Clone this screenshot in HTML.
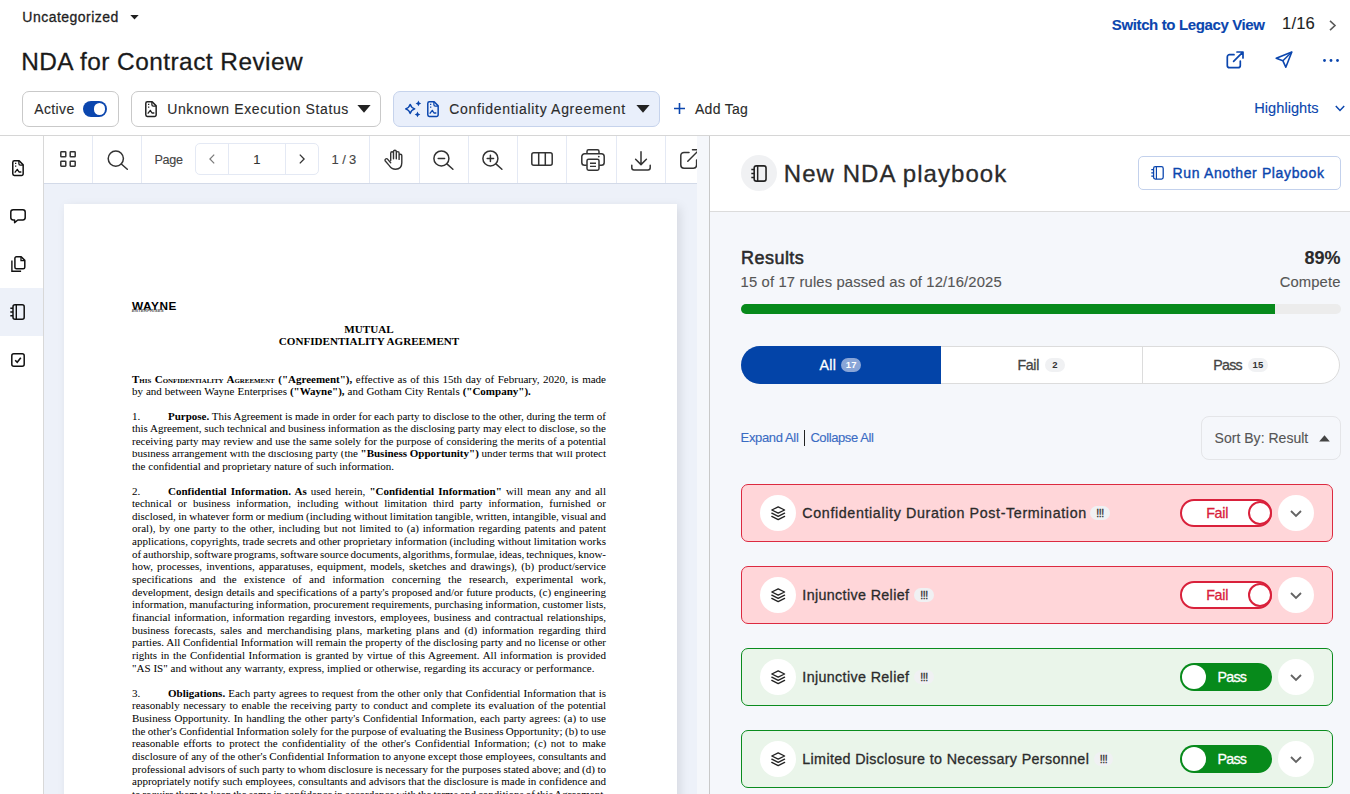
<!DOCTYPE html>
<html lang="en"><head><meta charset="utf-8"><title>NDA for Contract Review</title>
<style>
*{box-sizing:border-box}
html,body{margin:0;padding:0}
body{width:1350px;height:794px;overflow:hidden;background:#fff;position:relative;font-family:"Liberation Sans",Arial,sans-serif;color:#262626}
.t{position:absolute;white-space:nowrap;line-height:1;-webkit-text-stroke:0.12px currentColor}
.m{-webkit-text-stroke:0.3px currentColor}
.ms{-webkit-text-stroke:0.28px currentColor}
.abs{position:absolute}
svg{position:absolute;overflow:visible}
.chip{position:absolute;top:91px;height:36px;border:1px solid #c9c9c9;border-radius:7px;background:#fff}
.tb{position:absolute;top:136px;height:47px;border-left:1px solid #e4e9f4}
.doc{position:absolute;left:44px;top:184px;width:653px;height:610px;background:#edf1f9;overflow:hidden}
.page{position:absolute;left:20px;top:20px;width:613px;height:800px;background:#fff;box-shadow:3px 3px 10px rgba(0,0,0,.1);font-family:"Liberation Serif","Times New Roman",serif;font-size:11px;color:#000}
.ln{position:absolute;left:68px;white-space:nowrap;line-height:12.64px;height:12.64px}
.sc{font-size:6.9px;font-weight:bold}
.card{position:absolute;left:741px;width:592px;height:58px;border-radius:7px;border:1px solid}
.fail{background:#ffd6d9;border-color:#dc2a40}
.pass{background:#eaf5ea;border-color:#0a8c1e}
.circ{position:absolute;width:36px;height:36px;border-radius:50%;background:#fff}
.badge{position:absolute;height:14px;border-radius:7px;background:#f0f1f3;font-size:9.8px;font-weight:bold;line-height:14px;text-align:center;color:#333;letter-spacing:-0.4px}
.tab{display:inline-block;width:27.75px}
</style></head>
<body>
<div class="t m" style="top:10.05px;font-size:14px;color:#1f1f1f;letter-spacing:0.48px;left:22.30px;">Uncategorized</div>
<svg style="left:130px;top:14.6px" width="9" height="5" viewBox="0 0 9 5"><path d="M0.3 0h8.4L4.5 4.6z" fill="#1f1f1f"/></svg>
<div class="t ms" style="top:50.15px;font-size:24.4px;color:#1a1a1a;letter-spacing:0.47px;left:21.20px;">NDA for Contract Review</div>
<div class="chip" style="left:22px;width:97px"></div>
<div class="t" style="top:102.05px;font-size:14px;color:#2b2b2b;letter-spacing:0.35px;left:34.30px;">Active</div>
<div class="abs" style="left:83px;top:101px;width:24px;height:16px;border-radius:8px;background:#0b46ae"></div>
<div class="abs" style="left:93.5px;top:103.2px;width:11.6px;height:11.6px;border-radius:50%;background:#fff"></div>
<div class="chip" style="left:131px;width:250px"></div>
<svg style="left:144.8px;top:100.9px" width="12" height="16.2" viewBox="0 0 12 16.3"><path d="M2.3.8h4.9l4 4.100v9a1.600 1.600 0 0 1-1.600 1.600H2.300A1.600 1.600 0 0 1 .75 13.900V2.400A1.600 1.600 0 0 1 2.300.8z" fill="none" stroke="#222" stroke-width="1.500" stroke-linejoin="round"/><path d="M6.900 1v2.700a1.400 1.400 0 0 0 1.400 1.400h2.700" fill="none" stroke="#222" stroke-width="1.300" stroke-linejoin="round"/><path d="M3.100 12.300l2.200-2.900 1.700 2.700h1.900" fill="none" stroke="#222" stroke-width="1.300" stroke-linejoin="round" stroke-linecap="round"/><path d="M3 3.500h1.300M3 6.100h1.300" stroke="#222" stroke-width="1.300"/></svg>
<div class="t" style="top:102.05px;font-size:14px;color:#2b2b2b;letter-spacing:0.6px;left:167.20px;">Unknown Execution Status</div>
<svg style="left:357.3px;top:105px" width="14" height="8" viewBox="0 0 14 8"><path d="M.4 0h13.2L7 7.8z" fill="#222"/></svg>
<div class="chip" style="left:393px;width:267px;background:#e9effb;border-color:#c6d3ec"></div>
<svg style="left:404px;top:100px" width="18" height="18" viewBox="0 0 18 18"><path d="M6.20 4.30Q7.21 7.89 10.80 8.90Q7.21 9.91 6.20 13.50Q5.19 9.91 1.60 8.90Q5.19 7.89 6.20 4.30z" fill="none" stroke="#0b46ae" stroke-width="1.300" stroke-linejoin="round"/><path d="M14.40 0.60Q14.82 2.98 17.20 3.40Q14.82 3.82 14.40 6.20Q13.98 3.82 11.60 3.40Q13.98 2.98 14.40 0.60zM13.50 11.60Q13.92 13.98 16.30 14.40Q13.92 14.82 13.50 17.20Q13.08 14.82 10.70 14.40Q13.08 13.98 13.50 11.60z" fill="#0b46ae"/></svg>
<svg style="left:427.1px;top:100.8px" width="12" height="16.2" viewBox="0 0 12 16.3"><path d="M2.3.8h4.9l4 4.100v9a1.600 1.600 0 0 1-1.600 1.600H2.300A1.600 1.600 0 0 1 .75 13.900V2.400A1.600 1.600 0 0 1 2.300.8z" fill="none" stroke="#0b46ae" stroke-width="1.500" stroke-linejoin="round"/><path d="M6.900 1v2.700a1.400 1.400 0 0 0 1.400 1.400h2.700" fill="none" stroke="#0b46ae" stroke-width="1.300" stroke-linejoin="round"/><path d="M3.100 12.300l2.200-2.900 1.700 2.700h1.900" fill="none" stroke="#0b46ae" stroke-width="1.300" stroke-linejoin="round" stroke-linecap="round"/><path d="M3 3.500h1.300M3 6.100h1.300" stroke="#0b46ae" stroke-width="1.300"/></svg>
<div class="t" style="top:102.05px;font-size:14px;color:#2b2b2b;letter-spacing:0.68px;left:449.20px;">Confidentiality Agreement</div>
<svg style="left:636.3px;top:105px" width="14" height="8" viewBox="0 0 14 8"><path d="M.4 0h13.2L7 7.8z" fill="#222"/></svg>
<svg style="left:674px;top:103px" width="11" height="11" viewBox="0 0 11 11"><path d="M5.500 0v11M0 5.500h11" stroke="#0b46ae" stroke-width="1.6"/></svg>
<div class="t" style="top:102.05px;font-size:14px;color:#2b2b2b;letter-spacing:0.27px;left:695.00px;">Add Tag</div>
<div class="t" style="top:17.30px;font-size:15px;color:#0b46ae;font-weight:bold;letter-spacing:-0.37px;left:1111.80px;">Switch to Legacy View</div>
<div class="t" style="top:16.15px;font-size:16.6px;color:#1f1f1f;letter-spacing:0.15px;left:1282.00px;">1/16</div>
<svg style="left:1329px;top:19.8px" width="7" height="11" viewBox="0 0 7 11"><path d="M1 .8l5 4.700-5 4.700" fill="none" stroke="#5a5a5a" stroke-width="1.6"/></svg>
<svg style="left:1226px;top:51px" width="18" height="18" viewBox="0 0 18 18"><path d="M8 3.700H3.600A2.300 2.300 0 0 0 1.300 6v8.400a2.300 2.300 0 0 0 2.300 2.300H12a2.300 2.300 0 0 0 2.300-2.300V10" fill="none" stroke="#0b46ae" stroke-width="1.700" stroke-linecap="round"/><path d="M7.600 10.400L16.800 1.200M11 1h6v6" fill="none" stroke="#0b46ae" stroke-width="1.700" stroke-linecap="round" stroke-linejoin="round"/></svg>
<svg style="left:1274.5px;top:51px" width="18" height="17" viewBox="0 0 18 17"><path d="M16.800 1L1.200 7.300l6.700 2.500 2.900 6.400z" fill="none" stroke="#0b46ae" stroke-width="1.600" stroke-linejoin="round"/><path d="M7.900 9.800L16.800 1" fill="none" stroke="#0b46ae" stroke-width="1.500"/></svg>
<svg style="left:1323px;top:58.5px" width="16" height="3" viewBox="0 0 16 3"><circle cx="1.500" cy="1.500" r="1.400" fill="#0b46ae"/><circle cx="8" cy="1.500" r="1.400" fill="#0b46ae"/><circle cx="14.500" cy="1.500" r="1.400" fill="#0b46ae"/></svg>
<div class="t" style="top:100.64px;font-size:14.6px;color:#0b46ae;letter-spacing:0.02px;left:1254.30px;">Highlights</div>
<svg style="left:1334.5px;top:105.2px" width="10" height="7" viewBox="0 0 10 7"><path d="M.8 1l4.200 4.400L9.200 1" fill="none" stroke="#0b46ae" stroke-width="1.500"/></svg>
<div class="abs" style="left:0;top:135px;width:1350px;height:1px;background:#d6d6d6"></div>
<div class="abs" style="left:43px;top:136px;width:1px;height:658px;background:#d8d8d8"></div>
<div class="abs" style="left:0;top:288px;width:43px;height:48px;background:#edf1f9"></div>
<svg style="left:12px;top:159.8px" width="12" height="16.2" viewBox="0 0 12 16.3"><path d="M2.3.8h4.9l4 4.100v9a1.600 1.600 0 0 1-1.600 1.600H2.300A1.600 1.600 0 0 1 .75 13.900V2.400A1.600 1.600 0 0 1 2.300.8z" fill="none" stroke="#111" stroke-width="1.500" stroke-linejoin="round"/><path d="M6.900 1v2.700a1.400 1.400 0 0 0 1.400 1.400h2.700" fill="none" stroke="#111" stroke-width="1.300" stroke-linejoin="round"/><path d="M3.100 12.300l2.200-2.900 1.700 2.700h1.900" fill="none" stroke="#111" stroke-width="1.300" stroke-linejoin="round" stroke-linecap="round"/><path d="M3 3.500h1.300M3 6.100h1.300" stroke="#111" stroke-width="1.300"/></svg>
<svg style="left:10px;top:209px" width="16" height="15" viewBox="0 0 16 15"><path d="M3.200.800h9.600a2.400 2.400 0 0 1 2.400 2.400v5.400a2.400 2.400 0 0 1-2.400 2.400H7.800L4.600 13.600V11H3.200A2.400 2.400 0 0 1 .8 8.600V3.200A2.400 2.400 0 0 1 3.200.8z" fill="none" stroke="#111" stroke-width="1.500" stroke-linejoin="round"/></svg>
<svg style="left:10.800px;top:256px" width="15" height="16" viewBox="0 0 15 16"><path d="M5.400.800h4.800l3.600 3.600v6.800a1.500 1.500 0 0 1-1.500 1.500H5.400a1.500 1.500 0 0 1-1.500-1.500V2.300A1.500 1.500 0 0 1 5.400.8z" fill="none" stroke="#111" stroke-width="1.500" stroke-linejoin="round"/><path d="M10 1v3.600h3.700" fill="none" stroke="#111" stroke-width="1.300"/><path d="M.9 4.500v10.700h9.200" fill="none" stroke="#111" stroke-width="1.400"/></svg>
<svg style="left:9.7px;top:304.2px" width="15" height="16" viewBox="0 0 15 16"><rect x="3" y=".8" width="11.200" height="14.400" rx="2" fill="none" stroke="#111" stroke-width="1.500"/><path d="M6.300.8v14.400" stroke="#111" stroke-width="1.400"/><path d="M.3 4.300h2.700M.3 8h2.700M.3 11.700h2.700" stroke="#111" stroke-width="1.400"/></svg>
<svg style="left:11px;top:353px" width="14" height="14" viewBox="0 0 14 14"><rect x=".8" y=".8" width="12.400" height="12.400" rx="2" fill="none" stroke="#111" stroke-width="1.500"/><path d="M4.200 7.200l2 2 3.600-4.400" fill="none" stroke="#111" stroke-width="1.600"/></svg>
<div class="abs" style="left:44px;top:183px;width:653px;height:1px;background:#d3dae8"></div>
<div class="abs" style="left:92px;top:136px;width:1px;height:47px;background:#e4e9f4"></div>
<div class="abs" style="left:141px;top:136px;width:1px;height:47px;background:#e4e9f4"></div>
<div class="abs" style="left:369px;top:136px;width:1px;height:47px;background:#e4e9f4"></div>
<div class="abs" style="left:419px;top:136px;width:1px;height:47px;background:#e4e9f4"></div>
<div class="abs" style="left:468px;top:136px;width:1px;height:47px;background:#e4e9f4"></div>
<div class="abs" style="left:517px;top:136px;width:1px;height:47px;background:#e4e9f4"></div>
<div class="abs" style="left:566px;top:136px;width:1px;height:47px;background:#e4e9f4"></div>
<div class="abs" style="left:616px;top:136px;width:1px;height:47px;background:#e4e9f4"></div>
<div class="abs" style="left:665px;top:136px;width:1px;height:47px;background:#e4e9f4"></div>
<svg style="left:60px;top:151.300px" width="16" height="16" viewBox="0 0 16 16"><g fill="none" stroke="#333" stroke-width="1.500"><rect x=".8" y=".8" width="5" height="5" rx=".6"/><rect x="10.200" y=".8" width="5" height="5" rx=".6"/><rect x=".8" y="10.200" width="5" height="5" rx=".6"/><rect x="10.200" y="10.200" width="5" height="5" rx=".6"/></g></svg>
<svg style="left:106.500px;top:150px" width="21" height="20" viewBox="0 0 21 20"><circle cx="8.800" cy="8.600" r="7.600" fill="none" stroke="#333" stroke-width="1.500"/><path d="M14.300 14l6 5.300" stroke="#333" stroke-width="1.500" stroke-linecap="round"/></svg>
<div class="t" style="top:153.83px;font-size:12.6px;color:#444;letter-spacing:-0.3px;left:154.40px;">Page</div>
<div class="abs" style="left:195px;top:143px;width:124px;height:32px;border:1px solid #e4e9f4;border-radius:5px"></div>
<div class="abs" style="left:228px;top:143px;width:1px;height:32px;background:#e4e9f4"></div>
<div class="abs" style="left:285px;top:143px;width:1px;height:32px;background:#e4e9f4"></div>
<svg style="left:208.500px;top:154px" width="6" height="10" viewBox="0 0 6 10"><path d="M5.200.600L.9 5l4.300 4.400" fill="none" stroke="#7a7a7a" stroke-width="1.200"/></svg>
<svg style="left:299px;top:154px" width="6" height="10" viewBox="0 0 6 10"><path d="M.8.600L5.100 5 .8 9.400" fill="none" stroke="#333" stroke-width="1.300"/></svg>
<div class="t" style="top:152.80px;font-size:13px;color:#333;left:253.30px;">1</div>
<div class="t" style="top:152.80px;font-size:13px;color:#444;letter-spacing:-0.14px;left:331.60px;">1 / 3</div>
<svg style="left:384px;top:149px" width="20" height="21" viewBox="0 0 20 21"><path d="M6.700 11.500V4.200a1.400 1.400 0 0 1 2.800 0V9.700 2.600a1.400 1.400 0 0 1 2.800 0v7.100V4a1.400 1.400 0 0 1 2.800 0v6.400V6.600a1.350 1.350 0 0 1 2.700 0v7.200c0 3.800-2.400 6.400-6.300 6.400-3 0-4.700-1.300-6.200-3.600L1.100 11.800a1.500 1.500 0 0 1 2.400-1.700l3.200 3.600" fill="none" stroke="#333" stroke-width="1.400" stroke-linejoin="round" stroke-linecap="round"/></svg>
<svg style="left:432.8px;top:150px" width="21" height="20" viewBox="0 0 21 20"><circle cx="8.400" cy="8.400" r="7.500" fill="none" stroke="#333" stroke-width="1.500"/><path d="M13.900 13.900l6 5.300M5.200 8.400h6.400" stroke="#333" stroke-width="1.500" stroke-linecap="round"/></svg>
<svg style="left:481.8px;top:150px" width="21" height="20" viewBox="0 0 21 20"><circle cx="8.400" cy="8.400" r="7.500" fill="none" stroke="#333" stroke-width="1.500"/><path d="M13.900 13.900l6 5.300M5.200 8.400h6.400M8.400 5.200v6.400" stroke="#333" stroke-width="1.500" stroke-linecap="round"/></svg>
<svg style="left:531.300px;top:152px" width="22" height="14" viewBox="0 0 22 14"><rect x=".8" y=".8" width="20.400" height="12.400" rx="2" fill="none" stroke="#333" stroke-width="1.500"/><path d="M7.700.8v12.400M14.300.8v12.400" stroke="#333" stroke-width="1.500"/></svg>
<svg style="left:580.500px;top:149px" width="24" height="22" viewBox="0 0 24 22"><path d="M6 4.800V2.400A1.600 1.600 0 0 1 7.600.8h8.800A1.600 1.600 0 0 1 18 2.400v2.400" fill="none" stroke="#333" stroke-width="1.500"/><path d="M5.800 16.200H3.600A2.800 2.800 0 0 1 .8 13.400V7.600a2.800 2.800 0 0 1 2.800-2.800h16.800a2.800 2.800 0 0 1 2.800 2.800v5.800a2.800 2.800 0 0 1-2.800 2.800h-2.200" fill="none" stroke="#333" stroke-width="1.500"/><rect x="6" y="10.200" width="12" height="11" rx="1.600" fill="#fff" stroke="#333" stroke-width="1.500"/><path d="M9 14.200h6M9 17.400h6" stroke="#333" stroke-width="1.400"/><circle cx="17.800" cy="7.600" r=".9" fill="#333"/></svg>
<svg style="left:631px;top:150.500px" width="20" height="20" viewBox="0 0 20 20"><path d="M10 .8v12.400M4.600 8.200L10 13.600l5.400-5.400" fill="none" stroke="#333" stroke-width="1.500" stroke-linecap="round" stroke-linejoin="round"/><path d="M.8 14.200v2.600a2.200 2.200 0 0 0 2.200 2.200h14a2.200 2.200 0 0 0 2.200-2.200v-2.600" fill="none" stroke="#333" stroke-width="1.500" stroke-linecap="round"/></svg>
<div class="abs" style="left:666px;top:136px;width:31px;height:47px;overflow:hidden"><svg style="left:13.7px;top:13px" width="20" height="20" viewBox="0 0 20 20"><path d="M9 3.400H4A3.200 3.200 0 0 0 .8 6.600V16A3.200 3.200 0 0 0 4 19.200h9.400a3.200 3.200 0 0 0 3.200-3.200v-5" fill="none" stroke="#333" stroke-width="1.500" stroke-linecap="round"/><path d="M7.800 12.200L19 1M12.500.8H19.200V7.500" fill="none" stroke="#333" stroke-width="1.500" stroke-linecap="round" stroke-linejoin="round"/></svg></div>
<div class="doc"><div class="page"><div style="position:absolute;left:68.1px;top:96.81px;font:bold 11.8px/1 'Liberation Sans',sans-serif;white-space:nowrap;letter-spacing:0.5px">WAYNE</div>
<div style="position:absolute;left:67.8px;top:104.70px;font:italic bold 4.400px/1 'Liberation Sans',sans-serif;white-space:nowrap;letter-spacing:.08px;color:#555">ENTERPRISES</div>
<div class="ln" style="left:0;width:610px;text-align:center;top:118.67px;font-size:11.1px"><b>MUTUAL</b></div>
<div class="ln" style="left:0;width:610px;text-align:center;top:131.07px;font-size:11.1px"><b>CONFIDENTIALITY AGREEMENT</b></div>
<div class="ln" id="L0" style="top:168.57px;word-spacing:0.795px;"><span><b>T<span class="sc">HIS</span> C<span class="sc">ONFIDENTIALITY</span> A<span class="sc">GREEMENT</span> ("Agreement"),</b> effective as of this 15th day of February, 2020, is made</span></div>
<div class="ln" id="L1" style="top:180.77px;word-spacing:0.211px;"><span>by and between Wayne Enterprises <b>("Wayne"),</b> and Gotham City Rentals <b>("Company").</b></span></div>
<div class="ln" id="L2" style="top:205.57px;word-spacing:-0.069px;"><span>1.<span class="tab"></span><b>Purpose.</b> This Agreement is made in order for each party to disclose to the other, during the term of</span></div>
<div class="ln" id="L3" style="top:218.17px;word-spacing:-0.084px;"><span>this Agreement, such technical and business information as the disclosing party may elect to disclose, so the</span></div>
<div class="ln" id="L4" style="top:230.77px;word-spacing:0.234px;"><span>receiving party may review and use the same solely for the purpose of considering the merits of a potential</span></div>
<div class="ln" id="L5" style="top:243.27px;word-spacing:-0.037px;"><span>business arrangement with the disclosing party (the <b>"Business Opportunity")</b> under terms that will protect</span></div>
<div class="ln" id="L6" style="top:255.77px;word-spacing:0.076px;"><span>the confidential and proprietary nature of such information.</span></div>
<div class="ln" id="L7" style="top:280.57px;word-spacing:1.345px;"><span>2.<span class="tab"></span><b>Confidential Information. As</b> used herein, <b>"Confidential Information"</b> will mean any and all</span></div>
<div class="ln" id="L8" style="top:293.21px;word-spacing:3.291px;"><span>technical or business information, including without limitation third party information, furnished or</span></div>
<div class="ln" id="L9" style="top:305.85px;word-spacing:-0.269px;"><span>disclosed, in whatever form or medium (including without limitation tangible, written, intangible, visual and</span></div>
<div class="ln" id="L10" style="top:318.49px;word-spacing:1.044px;"><span>oral), by one party to the other, including but not limited to (a) information regarding patents and patent</span></div>
<div class="ln" id="L11" style="top:331.13px;word-spacing:-0.094px;"><span>applications, copyrights, trade secrets and other proprietary information (including without limitation works</span></div>
<div class="ln" id="L12" style="top:343.77px;word-spacing:-0.842px;"><span>of authorship, software programs, software source documents, algorithms, formulae, ideas, techniques, know-</span></div>
<div class="ln" id="L13" style="top:356.41px;word-spacing:1.375px;"><span>how, processes, inventions, apparatuses, equipment, models, sketches and drawings), (b) product/service</span></div>
<div class="ln" id="L14" style="top:369.05px;word-spacing:4.689px;"><span>specifications and the existence of and information concerning the research, experimental work,</span></div>
<div class="ln" id="L15" style="top:381.69px;word-spacing:0.194px;"><span>development, design details and specifications of a party's proposed and/or future products, (c) engineering</span></div>
<div class="ln" id="L16" style="top:394.33px;word-spacing:-0.127px;"><span>information, manufacturing information, procurement requirements, purchasing information, customer lists,</span></div>
<div class="ln" id="L17" style="top:406.97px;word-spacing:0.972px;"><span>financial information, information regarding investors, employees, business and contractual relationships,</span></div>
<div class="ln" id="L18" style="top:419.61px;word-spacing:1.875px;"><span>business forecasts, sales and merchandising plans, marketing plans and (d) information regarding third</span></div>
<div class="ln" id="L19" style="top:432.25px;word-spacing:-0.026px;"><span>parties. All Confidential Information will remain the property of the disclosing party and no license or other</span></div>
<div class="ln" id="L20" style="top:444.89px;word-spacing:0.886px;"><span>rights in the Confidential Information is granted by virtue of this Agreement. All information is provided</span></div>
<div class="ln" id="L21" style="top:457.53px;word-spacing:0.103px;"><span>"AS IS" and without any warranty, express, implied or otherwise, regarding its accuracy or performance.</span></div>
<div class="ln" id="L22" style="top:482.77px;word-spacing:0.321px;"><span>3.<span class="tab"></span><b>Obligations.</b> Each party agrees to request from the other only that Confidential Information that is</span></div>
<div class="ln" id="L23" style="top:495.41px;word-spacing:0.750px;"><span>reasonably necessary to enable the receiving party to conduct and complete its evaluation of the potential</span></div>
<div class="ln" id="L24" style="top:508.05px;word-spacing:0.600px;"><span>Business Opportunity. In handling the other party's Confidential Information, each party agrees: (a) to use</span></div>
<div class="ln" id="L25" style="top:520.69px;word-spacing:-0.325px;"><span>the other's Confidential Information solely for the purpose of evaluating the Business Opportunity; (b) to use</span></div>
<div class="ln" id="L26" style="top:533.33px;word-spacing:1.613px;"><span>reasonable efforts to protect the confidentiality of the other's Confidential Information; (c) not to make</span></div>
<div class="ln" id="L27" style="top:545.97px;word-spacing:-0.040px;"><span>disclosure of any of the other's Confidential Information to anyone except those employees, consultants and</span></div>
<div class="ln" id="L28" style="top:558.61px;word-spacing:-0.204px;"><span>professional advisors of such party to whom disclosure is necessary for the purposes stated above; and (d) to</span></div>
<div class="ln" id="L29" style="top:571.25px;word-spacing:0.015px;"><span>appropriately notify such employees, consultants and advisors that the disclosure is made in confidence and</span></div>
<div class="ln" id="L30" style="top:583.89px;word-spacing:-0.700px;"><span>to require them to keep the same in confidence in accordance with the terms and conditions of this Agreement.</span></div>
<div style="position:absolute;left:66px;top:243.9px;width:229.5px;height:2.8px;background:#fff"></div>
<div style="position:absolute;left:416.5px;top:243.9px;width:128px;height:2.8px;background:#fff"></div></div></div>
<div class="abs" style="left:697px;top:136px;width:12px;height:658px;background:#f5f7fb"></div>
<div class="abs" style="left:709px;top:136px;width:1px;height:658px;background:#c9c9c9"></div>
<div class="abs" style="left:710px;top:211px;width:640px;height:1px;background:#dcdcdc"></div>
<div class="abs" style="left:710px;top:212px;width:640px;height:582px;background:#f5f7fb"></div>
<div class="abs" style="left:741px;top:154.700px;width:36px;height:36px;border-radius:50%;background:#f0f1f3"></div>
<svg style="left:750.6px;top:165.2px" width="15.9" height="16.96" viewBox="0 0 15 16"><rect x="3" y=".8" width="11.200" height="14.400" rx="2" fill="none" stroke="#222" stroke-width="1.500"/><path d="M6.300.8v14.400" stroke="#222" stroke-width="1.400"/><path d="M.3 4.300h2.700M.3 8h2.700M.3 11.700h2.700" stroke="#222" stroke-width="1.400"/></svg>
<div class="t" style="top:161.78px;font-size:24px;color:#2b2b2b;letter-spacing:1.04px;left:783.80px;-webkit-text-stroke:0.3px currentColor;">New NDA playbook</div>
<div class="abs" style="left:1138px;top:156px;width:203px;height:34px;border:1px solid #c3d1ec;border-radius:5px;background:#fff"></div>
<svg style="left:1150.6px;top:166.4px" width="12.9" height="13.76" viewBox="0 0 15 16"><rect x="3" y=".8" width="11.200" height="14.400" rx="2" fill="none" stroke="#0b46ae" stroke-width="1.500"/><path d="M6.300.8v14.400" stroke="#0b46ae" stroke-width="1.400"/><path d="M.3 4.300h2.700M.3 8h2.700M.3 11.700h2.700" stroke="#0b46ae" stroke-width="1.400"/></svg>
<div class="t" style="top:166.15px;font-size:14px;color:#0b46ae;letter-spacing:0.63px;left:1172.60px;-webkit-text-stroke:0.38px currentColor;">Run Another Playbook</div>
<div class="t" style="top:248.66px;font-size:18px;color:#2b2b2b;letter-spacing:0.47px;left:741.00px;-webkit-text-stroke:0.55px currentColor;">Results</div>
<div class="t" style="top:248.56px;font-size:18px;color:#2b2b2b;font-weight:bold;right:9.50px;">89%</div>
<div class="t" style="top:274.57px;font-size:14.8px;color:#555;letter-spacing:0.14px;left:740.60px;">15 of 17 rules passed as of 12/16/2025</div>
<div class="t" style="top:274.77px;font-size:14.8px;color:#555;letter-spacing:0.1px;right:9.50px;">Compete</div>
<div class="abs" style="left:741px;top:304px;width:599.500px;height:10px;border-radius:5px;background:#ececec;overflow:hidden"><div style="width:534px;height:10px;background:#078a1b"></div></div>
<div class="abs" style="left:741px;top:346px;width:599px;height:38px;border-radius:19px;background:#fff;border:1px solid #dcdcdc;overflow:hidden"><div style="position:absolute;left:399.500px;top:0;width:1px;height:36px;background:#dcdcdc"></div></div>
<div class="abs" style="left:741px;top:346px;width:200px;height:38px;border-radius:19px 0 0 19px;background:#0344a8"></div>
<div class="t m" style="top:357.98px;font-size:14.2px;color:#fff;letter-spacing:0.3px;left:819.60px;">All</div>
<div class="badge" style="left:841.400px;top:358px;width:19.500px;background:#89a5d7;color:#fff;font-size:9.5px;letter-spacing:0">17</div>
<div class="t m" style="top:357.98px;font-size:14.2px;color:#444;letter-spacing:-0.3px;left:1017.40px;">Fail</div>
<div class="badge" style="left:1045px;top:358px;width:19.800px;background:#f0f1f3;font-size:9.5px;letter-spacing:0">2</div>
<div class="t m" style="top:358.38px;font-size:14.2px;color:#444;letter-spacing:-0.75px;left:1213.30px;">Pass</div>
<div class="badge" style="left:1248px;top:358px;width:19.800px;background:#f0f1f3;font-size:9.5px;letter-spacing:0">15</div>
<div class="t" style="top:431.20px;font-size:13px;color:#3a6bc3;letter-spacing:-0.36px;left:740.60px;">Expand All</div>
<div class="abs" style="left:804px;top:430px;width:1.300px;height:16px;background:#222"></div>
<div class="t" style="top:431.20px;font-size:13px;color:#3a6bc3;letter-spacing:-0.41px;left:810.40px;">Collapse All</div>
<div class="abs" style="left:1201px;top:416px;width:140px;height:44px;border:1px solid #e4e5e8;border-radius:8px"></div>
<div class="t" style="top:431.35px;font-size:14px;color:#555;letter-spacing:0.02px;left:1214.60px;">Sort By: Result</div>
<svg style="left:1318.600px;top:434.500px" width="11" height="7" viewBox="0 0 11 7"><path d="M.2 6.600h10.600L5.500.2z" fill="#444"/></svg>
<div class="card fail" style="top:484px"></div>
<div class="circ" style="left:760px;top:495px"></div>
<svg style="left:770.800px;top:505.8px" width="14.400" height="14.400" viewBox="0 0 14.400 14.400"><path d="M7.200.800L13.600 4 7.200 7.200.800 4z" fill="none" stroke="#222" stroke-width="1.300" stroke-linejoin="round"/><path d="M.8 7.200l6.400 3.200 6.400-3.200M.8 10.400l6.400 3.200 6.400-3.200" fill="none" stroke="#222" stroke-width="1.300" stroke-linejoin="round" stroke-linecap="round"/></svg>
<div class="t m" style="top:506.00px;font-size:14.3px;color:#2b2b2b;letter-spacing:0.62px;left:802.30px;">Confidentiality Duration Post-Termination</div>
<div class="badge" style="left:1090px;top:505.8px;width:20px;background:#f0f1f3;font-weight:normal;font-size:10.5px;-webkit-text-stroke:0.3px #333;letter-spacing:-0.45px">!!!</div>
<div class="abs" style="left:1180px;top:499px;width:92px;height:28px;border-radius:14px;border:2px solid #d9213b;background:#fff"></div>
<div class="abs" style="left:1248px;top:501px;width:24px;height:24px;border-radius:50%;border:2px solid #d9213b;background:#fff"></div>
<div class="t m" style="top:506.00px;font-size:14.3px;color:#d9213b;letter-spacing:-0.3px;left:1206.20px;">Fail</div>
<div class="circ" style="left:1278px;top:495px"></div>
<svg style="left:1290.300px;top:509.6px" width="12" height="8" viewBox="0 0 12 8"><path d="M1 1l5 5 5-5" fill="none" stroke="#636363" stroke-width="1.800"/></svg>
<div class="card fail" style="top:566px"></div>
<div class="circ" style="left:760px;top:577px"></div>
<svg style="left:770.800px;top:587.8px" width="14.400" height="14.400" viewBox="0 0 14.400 14.400"><path d="M7.200.800L13.600 4 7.200 7.200.800 4z" fill="none" stroke="#222" stroke-width="1.300" stroke-linejoin="round"/><path d="M.8 7.200l6.400 3.200 6.400-3.200M.8 10.400l6.400 3.200 6.400-3.200" fill="none" stroke="#222" stroke-width="1.300" stroke-linejoin="round" stroke-linecap="round"/></svg>
<div class="t m" style="top:588.00px;font-size:14.3px;color:#2b2b2b;letter-spacing:0.36px;left:802.30px;">Injunctive Relief</div>
<div class="badge" style="left:914px;top:587.8px;width:20px;background:#f0f1f3;font-weight:normal;font-size:10.5px;-webkit-text-stroke:0.3px #333;letter-spacing:-0.45px">!!!</div>
<div class="abs" style="left:1180px;top:581px;width:92px;height:28px;border-radius:14px;border:2px solid #d9213b;background:#fff"></div>
<div class="abs" style="left:1248px;top:583px;width:24px;height:24px;border-radius:50%;border:2px solid #d9213b;background:#fff"></div>
<div class="t m" style="top:588.00px;font-size:14.3px;color:#d9213b;letter-spacing:-0.3px;left:1206.20px;">Fail</div>
<div class="circ" style="left:1278px;top:577px"></div>
<svg style="left:1290.300px;top:591.6px" width="12" height="8" viewBox="0 0 12 8"><path d="M1 1l5 5 5-5" fill="none" stroke="#636363" stroke-width="1.800"/></svg>
<div class="card pass" style="top:648px"></div>
<div class="circ" style="left:760px;top:659px"></div>
<svg style="left:770.800px;top:669.8px" width="14.400" height="14.400" viewBox="0 0 14.400 14.400"><path d="M7.200.800L13.600 4 7.200 7.200.800 4z" fill="none" stroke="#222" stroke-width="1.300" stroke-linejoin="round"/><path d="M.8 7.200l6.400 3.200 6.400-3.200M.8 10.400l6.400 3.200 6.400-3.200" fill="none" stroke="#222" stroke-width="1.300" stroke-linejoin="round" stroke-linecap="round"/></svg>
<div class="t m" style="top:670.00px;font-size:14.3px;color:#2b2b2b;letter-spacing:0.36px;left:802.30px;">Injunctive Relief</div>
<div class="badge" style="left:914px;top:669.8px;width:20px;background:#f0f1f3;font-weight:normal;font-size:10.5px;-webkit-text-stroke:0.3px #333;letter-spacing:-0.45px">!!!</div>
<div class="abs" style="left:1180px;top:663px;width:92px;height:28px;border-radius:14px;background:#078a1b"></div>
<div class="abs" style="left:1182px;top:665px;width:24px;height:24px;border-radius:50%;background:#fff"></div>
<div class="t m" style="top:670.00px;font-size:14.3px;color:#fff;letter-spacing:-0.8px;left:1217.60px;">Pass</div>
<div class="circ" style="left:1278px;top:659px"></div>
<svg style="left:1290.300px;top:673.6px" width="12" height="8" viewBox="0 0 12 8"><path d="M1 1l5 5 5-5" fill="none" stroke="#636363" stroke-width="1.800"/></svg>
<div class="card pass" style="top:730px"></div>
<div class="circ" style="left:760px;top:741px"></div>
<svg style="left:770.800px;top:751.8px" width="14.400" height="14.400" viewBox="0 0 14.400 14.400"><path d="M7.200.800L13.600 4 7.200 7.200.800 4z" fill="none" stroke="#222" stroke-width="1.300" stroke-linejoin="round"/><path d="M.8 7.200l6.400 3.200 6.400-3.200M.8 10.400l6.400 3.200 6.400-3.200" fill="none" stroke="#222" stroke-width="1.300" stroke-linejoin="round" stroke-linecap="round"/></svg>
<div class="t m" style="top:752.00px;font-size:14.3px;color:#2b2b2b;letter-spacing:0.35px;left:802.30px;">Limited Disclosure to Necessary Personnel</div>
<div class="badge" style="left:1094px;top:751.8px;width:19px;background:#f0f1f3;font-weight:normal;font-size:10.5px;-webkit-text-stroke:0.3px #333;letter-spacing:-0.45px">!!!</div>
<div class="abs" style="left:1180px;top:745px;width:92px;height:28px;border-radius:14px;background:#078a1b"></div>
<div class="abs" style="left:1182px;top:747px;width:24px;height:24px;border-radius:50%;background:#fff"></div>
<div class="t m" style="top:752.00px;font-size:14.3px;color:#fff;letter-spacing:-0.8px;left:1217.60px;">Pass</div>
<div class="circ" style="left:1278px;top:741px"></div>
<svg style="left:1290.300px;top:755.6px" width="12" height="8" viewBox="0 0 12 8"><path d="M1 1l5 5 5-5" fill="none" stroke="#636363" stroke-width="1.800"/></svg>
</body></html>
